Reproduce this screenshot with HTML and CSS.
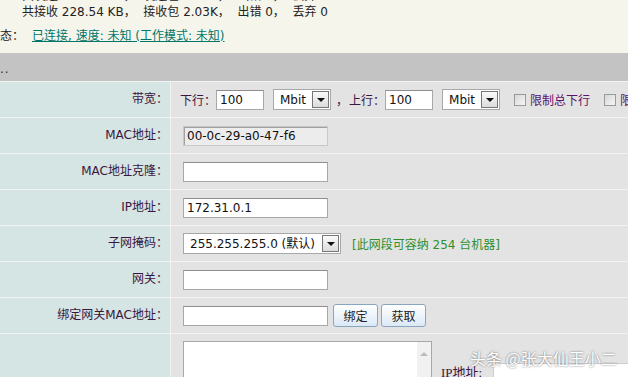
FILE: index.html
```html
<!DOCTYPE html>
<html lang="zh-CN">
<head>
  <meta charset="UTF-8">
  <title>WAN 设置</title>
<link rel="stylesheet" href="styles.css">
</head>
<body>
<div class="stats">
  <div class="line cut">共发送 231.20 KB，&nbsp; 发送包 2.11K，&nbsp; 出错 0，&nbsp; 丢弃 0</div>
  <div class="line">共接收 228.54 KB，&nbsp; 接收包 2.03K，&nbsp; 出错 0，&nbsp; 丢弃 0</div>
  <div class="status"><span class="lbl">态：</span><a href="#">已连接, 速度: 未知 (工作模式: 未知)</a></div>
</div>
<div class="bar">..</div>
<div class="form">
  <div class="row">
    <div class="label">带宽：</div>
    <div class="field">
      <span class="txtlbl">下行：</span><input class="txt short" value="100">
      <span class="sel w58"><select><option>Mbit</option></select><span class="arrow"></span></span>
      <span class="comma">，</span>
      <span>上行：</span><input class="txt short" value="100">
      <span class="sel w58"><select><option>Mbit</option></select><span class="arrow"></span></span>
      <label class="chk"><input type="checkbox">限制总下行</label>
      <label class="chk"><input type="checkbox">限制总上行</label>
    </div>
  </div>
  <div class="row">
    <div class="label">MAC地址：</div>
    <div class="field"><input class="txt off" value="00-0c-29-a0-47-f6" disabled></div>
  </div>
  <div class="row">
    <div class="label">MAC地址克隆：</div>
    <div class="field"><input class="txt"></div>
  </div>
  <div class="row">
    <div class="label">IP地址：</div>
    <div class="field"><input class="txt" value="172.31.0.1"></div>
  </div>
  <div class="row">
    <div class="label">子网掩码：</div>
    <div class="field">
      <span class="sel w158"><select><option>255.255.255.0 (默认)</option></select><span class="arrow"></span></span>
      <span class="hint">[此网段可容纳 254 台机器]</span>
    </div>
  </div>
  <div class="row">
    <div class="label">网关：</div>
    <div class="field"><input class="txt"></div>
  </div>
  <div class="row">
    <div class="label">绑定网关MAC地址：</div>
    <div class="field">
      <input class="txt">
      <button class="btn">绑定</button><button class="btn">获取</button>
    </div>
  </div>
  <div class="row last">
    <div class="label"></div>
    <div class="field top">
      <span class="area"><textarea></textarea><span class="scroll"><span class="up"></span></span></span>
      <span class="ip">IP地址:</span><input class="txt ipbox">
    </div>
  </div>
</div>
<div class="mark">头条 @张大仙王小二</div>
</body>
</html>
```

FILE: styles.css
```css
* {
    box-sizing: border-box;
}
body {
    margin: 0;
    background: #e3e3e3;
    font-family: Tahoma, "DejaVu Sans", "Noto Sans CJK SC", sans-serif;
    font-size: 12px;
    color: #222;
    overflow: hidden;
    height: 377px;
    position: relative;
}
.stats {
    background: #f6f5ec;
    height: 53px;
    overflow: hidden;
}
.stats .line {
    padding-left: 22px;
    height: 16px;
    line-height: 16px;
    color: #222;
}
.stats .cut {
    margin-top: -12px;
}
.status {
    margin-top: 8px;
    line-height: 16px;
}
.status .lbl {
    display: inline-block;
    width: 32px;
}
.status a {
    color: #00766a;
}
.bar {
    background: #c3c3c3;
    height: 28px;
    line-height: 32px;
    color: #333;
    letter-spacing: 1px;
}
.row {
    display: flex;
    height: 36px;
    border-top: 1px solid #f2f2f0;
    overflow: hidden;
}
.row.last {
    height: 60px;
}
.label {
    width: 171px;
    flex: none;
    background: #d4e5e3;
    border-right: 1px solid #f2f2f0;
    text-align: right;
    padding-right: 2px;
    line-height: 35px;
    color: #3a1640;
}
.field {
    display: flex;
    align-items: center;
    padding-left: 12px;
    color: #3a1640;
    white-space: nowrap;
}
.field.top {
    align-items: flex-start;
    padding-top: 7px;
}
.txt {
    width: 145px;
    height: 20px;
    border: 1px solid #a8a8a8;
    border-top-color: #8e8e8e;
    background: #fff;
    font: 12px Tahoma, "DejaVu Sans", sans-serif;
    color: #111;
    padding: 0 3px;
}
.txt.short {
    width: 48px;
    margin-right: 9px;
}
.txt.off {
    background: #ececec;
    border-color: #c8c8c8;
    box-shadow: inset 1px 1px 0 #a0a0a0;
}
.txtlbl {
    margin-left: -3px;
}
.sel {
    position: relative;
    display: inline-block;
    height: 21px;
}
.sel select {
    appearance: none;
    -webkit-appearance: none;
    width: 100%;
    height: 21px;
    border: 1px solid #a8a8a8;
    background: #fff;
    font: 12px Tahoma, "DejaVu Sans", "Noto Sans CJK SC", sans-serif;
    color: #111;
    padding: 0 6px;
}
.sel .arrow {
    position: absolute;
    right: 2px;
    top: 2px;
    width: 17px;
    height: 17px;
    border: 1px solid #777;
    background: linear-gradient(#fafafa, #dcdcdc);
}
.sel .arrow::after {
    content: "";
    position: absolute;
    left: 4px;
    top: 6px;
    border: 4px solid transparent;
    border-top: 4px solid #111;
}
.w58 {
    width: 58px;
}
.w158 {
    width: 158px;
}
.comma {
    margin: 0 1px 0 5px;
}
.chk {
    display: inline-flex;
    align-items: center;
    margin-left: 6px;
    color: #5c1266;
}
.chk input {
    appearance: none;
    -webkit-appearance: none;
    width: 12px;
    height: 12px;
    margin: 0 4px 0 8px;
    border: 1px solid #9a9a9a;
    background: linear-gradient(135deg, #d8d8d8, #f6f6f6);
}
.hint {
    color: #2f8f2a;
    margin-left: 11px;
}
.btn {
    width: 45px;
    height: 23px;
    margin-left: 5px;
    border: 1px solid #8aa5c0;
    border-radius: 3px;
    background: linear-gradient(#ffffff, #dbe9f6);
    font: 12px "Noto Sans CJK SC", sans-serif;
    color: #222;
    padding: 0;
}
.btn + .btn {
    margin-left: 3px;
}
.area {
    position: relative;
    display: inline-block;
    width: 249px;
    height: 60px;
}
.area textarea {
    width: 100%;
    height: 100%;
    border: 1px solid #a8a8a8;
    resize: none;
    background: #fff;
}
.scroll {
    position: absolute;
    right: 1px;
    top: 1px;
    bottom: 0;
    width: 14px;
    background: #f1f1f1;
}
.scroll .up {
    position: absolute;
    left: 3px;
    top: 6px;
    border: 4px solid transparent;
    border-bottom: 4px solid #bbb;
}
.ip {
    font-family: "Liberation Serif", "Noto Sans CJK SC", serif;
    font-size: 13px;
    margin: 21px 0 0 9px;
    color: #3a1640;
}
.txt.ipbox {
    margin: 22px 0 0 11px;
    width: 140px;
    border-color: #ccc;
}
.mark {
    position: absolute;
    left: 470px;
    top: 346px;
    font: 16px "Noto Sans CJK SC", sans-serif;
    color: #fff;
    text-shadow: 0 0 2px rgba(0, 0, 0, .6);
}
```
